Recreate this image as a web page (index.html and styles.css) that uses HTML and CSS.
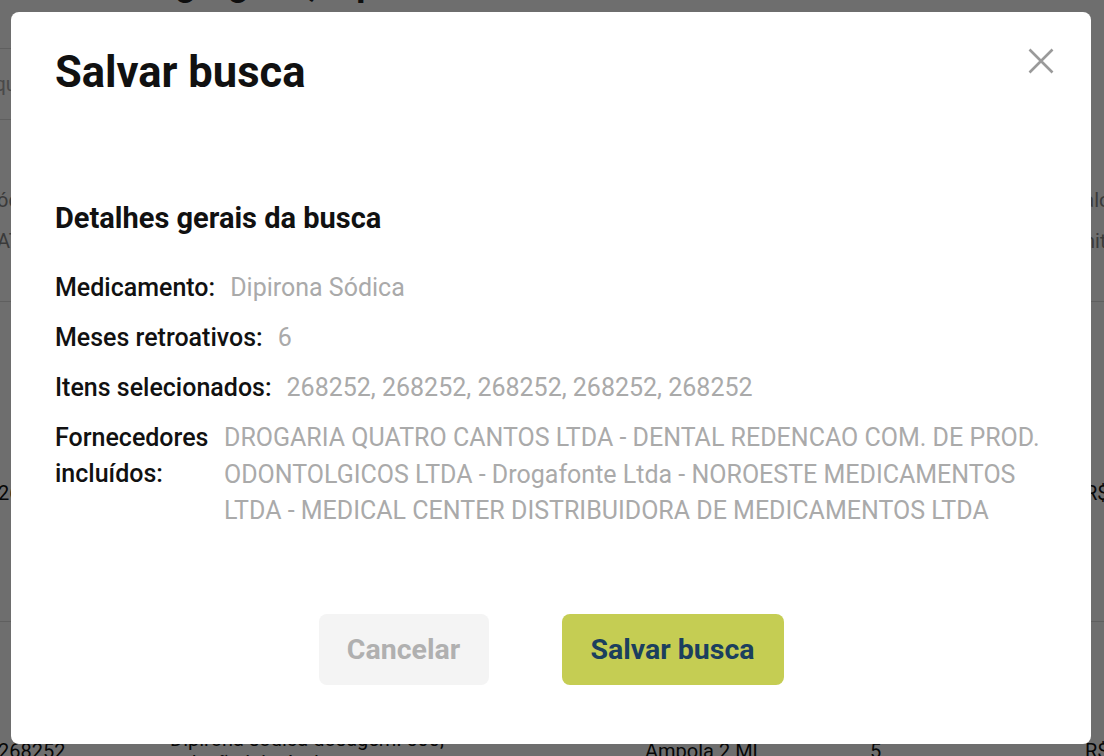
FILE: index.html
```html
<!DOCTYPE html>
<html lang="pt-BR">
<head>
    <meta charset="UTF-8">
    <meta name="viewport" content="width=device-width, initial-scale=1.0">
    <title>Salvar busca</title>
    <link rel="stylesheet" href="styles.css">
</head>
<body>
    <!-- Page behind the modal -->
    <div class="page">
        <h1 class="page-title">Histórico agregado, dipirona</h1>
        <div class="toolbar">
            <div class="search-box">Pesquisar medicamento</div>
        </div>
        <table class="results">
            <colgroup>
                <col class="c-code">
                <col class="c-desc">
                <col class="c-pres">
                <col class="c-qty">
                <col class="c-val">
            </colgroup>
            <thead>
                <tr>
                    <th class="shift">Código</th>
                    <th>Descrição</th>
                    <th>Apresentação</th>
                    <th>Qtd.</th>
                    <th class="shift">Valor</th>
                </tr>
                <tr class="sub">
                    <td class="shift">CATMAT</td>
                    <td></td>
                    <td></td>
                    <td></td>
                    <td class="shift">Unit.</td>
                </tr>
            </thead>
            <tbody>
                <tr>
                    <td>268252</td>
                    <td>Dipirona sódica dosagem: 500,<br>solução injetável</td>
                    <td>Ampola 2 ML</td>
                    <td>5</td>
                    <td>R$ 1,20</td>
                </tr>
                <tr>
                    <td>268252</td>
                    <td>Dipirona sódica dosagem: 500,<br>solução injetável</td>
                    <td>Ampola 2 ML</td>
                    <td>5</td>
                    <td>R$ 1,20</td>
                </tr>
            </tbody>
        </table>
    </div>

    <div class="overlay">
        <div class="modal">
            <div class="modal-header">
                <h2>Salvar busca</h2>
                <button class="close" aria-label="Fechar">
                    <svg width="26" height="26" viewBox="0 0 26 26">
                        <path d="M1.5 1.5 L24.5 24.5 M24.5 1.5 L1.5 24.5" stroke="#9a9a9a" stroke-width="2.6" fill="none"/>
                    </svg>
                </button>
            </div>

            <h3>Detalhes gerais da busca</h3>

            <div class="detail">
                <span class="label">Medicamento:</span>
                <span class="value">Dipirona Sódica</span>
            </div>
            <div class="detail">
                <span class="label">Meses retroativos:</span>
                <span class="value">6</span>
            </div>
            <div class="detail">
                <span class="label">Itens selecionados:</span>
                <span class="value">268252, 268252, 268252, 268252, 268252</span>
            </div>
            <div class="detail wide">
                <span class="label">Fornecedores incluídos:</span>
                <span class="value">DROGARIA QUATRO CANTOS LTDA - DENTAL REDENCAO COM. DE PROD. ODONTOLGICOS LTDA - Drogafonte Ltda - NOROESTE MEDICAMENTOS LTDA - MEDICAL CENTER DISTRIBUIDORA DE MEDICAMENTOS LTDA</span>
            </div>

            <div class="actions">
                <button class="btn btn-cancel">Cancelar</button>
                <button class="btn btn-save">Salvar busca</button>
            </div>
        </div>
    </div>
</body>
</html>
```

FILE: styles.css
```css
body {
    font-family: Roboto, "Liberation Sans", sans-serif;
    margin: 0;
    padding: 0;
    background: #fff;
    color: #222;
    height: 100vh;
    overflow: hidden;
}

/* page underneath */
.page {
    overflow: hidden;
    height: 100vh;
}
.page-title {
    margin: -38px 0 0 0;
    font-size: 36px;
    line-height: 42px;
    font-weight: 700;
    white-space: nowrap;
}
.toolbar {
    margin-top: 44px;
    display: flex;
}
.search-box {
    margin-left: -60px;
    width: 320px;
    height: 70px;
    border: 1px solid #ddd;
    border-radius: 6px;
    display: flex;
    align-items: center;
    padding-left: 20px;
    color: #aaa;
    font-size: 20px;
}
.results {
    table-layout: fixed;
    width: 1230px;
    margin-left: -2px;
    border-collapse: collapse;
    font-size: 20px;
    line-height: 24px;
}
.c-code { width: 172px; }
.c-desc { width: 475px; }
.c-pres { width: 225px; }
.c-qty { width: 215px; }
.c-val { width: 143px; }
.results th,
.results td {
    text-align: left;
    padding-left: 0;
    padding-right: 20px;
    vertical-align: middle;
    white-space: nowrap;
}
.results .shift {
    text-indent: -14px;
}
.results th {
    font-weight: 400;
    color: #888;
    padding-top: 68px;
}
.results .sub td {
    color: #888;
    padding-top: 16px;
    padding-bottom: 48px;
    border-bottom: 1px solid #ddd;
}
.results tbody td {
    padding-top: 167px;
    padding-bottom: 104px;
    border-bottom: 1px solid #ddd;
    color: #111;
}
.results tbody tr + tr td {
    padding-top: 105px;
}

/* modal */
.overlay {
    position: fixed;
    inset: 0;
    background: rgba(0, 0, 0, 0.57);
    display: flex;
    align-items: flex-start;
}
.modal {
    margin: 12px 0 0 11px;
    width: 1080px;
    height: 732px;
    box-sizing: border-box;
    background: #fff;
    border-radius: 8px;
    padding: 36px 44px 0;
    color: #111;
}
.modal-header {
    display: flex;
    justify-content: space-between;
    align-items: flex-start;
}
.modal-header h2 {
    margin: 0;
    font-size: 43.5px;
    font-weight: 700;
    line-height: 50px;
}
.close {
    background: none;
    border: none;
    padding: 0;
    margin: 0 -7px 0 0;
    cursor: pointer;
}
h3 {
    margin: 102px 0 34px;
    font-size: 29px;
    font-weight: 700;
    line-height: 36px;
}
.detail {
    display: flex;
    font-size: 25px;
    line-height: 36px;
    margin-bottom: 14px;
}
.label {
    font-weight: 500;
    color: #111;
    margin-right: 15px;
    white-space: nowrap;
}
.value {
    color: #aaa;
}
.wide {
    margin-top: 2px;
}
.wide .label {
    white-space: normal;
    width: 154px;
    flex-shrink: 0;
}
.wide .value {
    line-height: 36.5px;
}
.actions {
    display: flex;
    justify-content: center;
    gap: 73px;
    margin-top: 84px;
}
.btn {
    font-family: inherit;
    font-size: 28.5px;
    font-weight: 700;
    border: none;
    border-radius: 8px;
    height: 71px;
    cursor: pointer;
}
.btn-cancel {
    width: 170px;
    background: #f4f4f4;
    color: #b0b0b0;
}
.btn-save {
    width: 222px;
    background: #c5cd53;
    color: #1b3f5e;
}
```
